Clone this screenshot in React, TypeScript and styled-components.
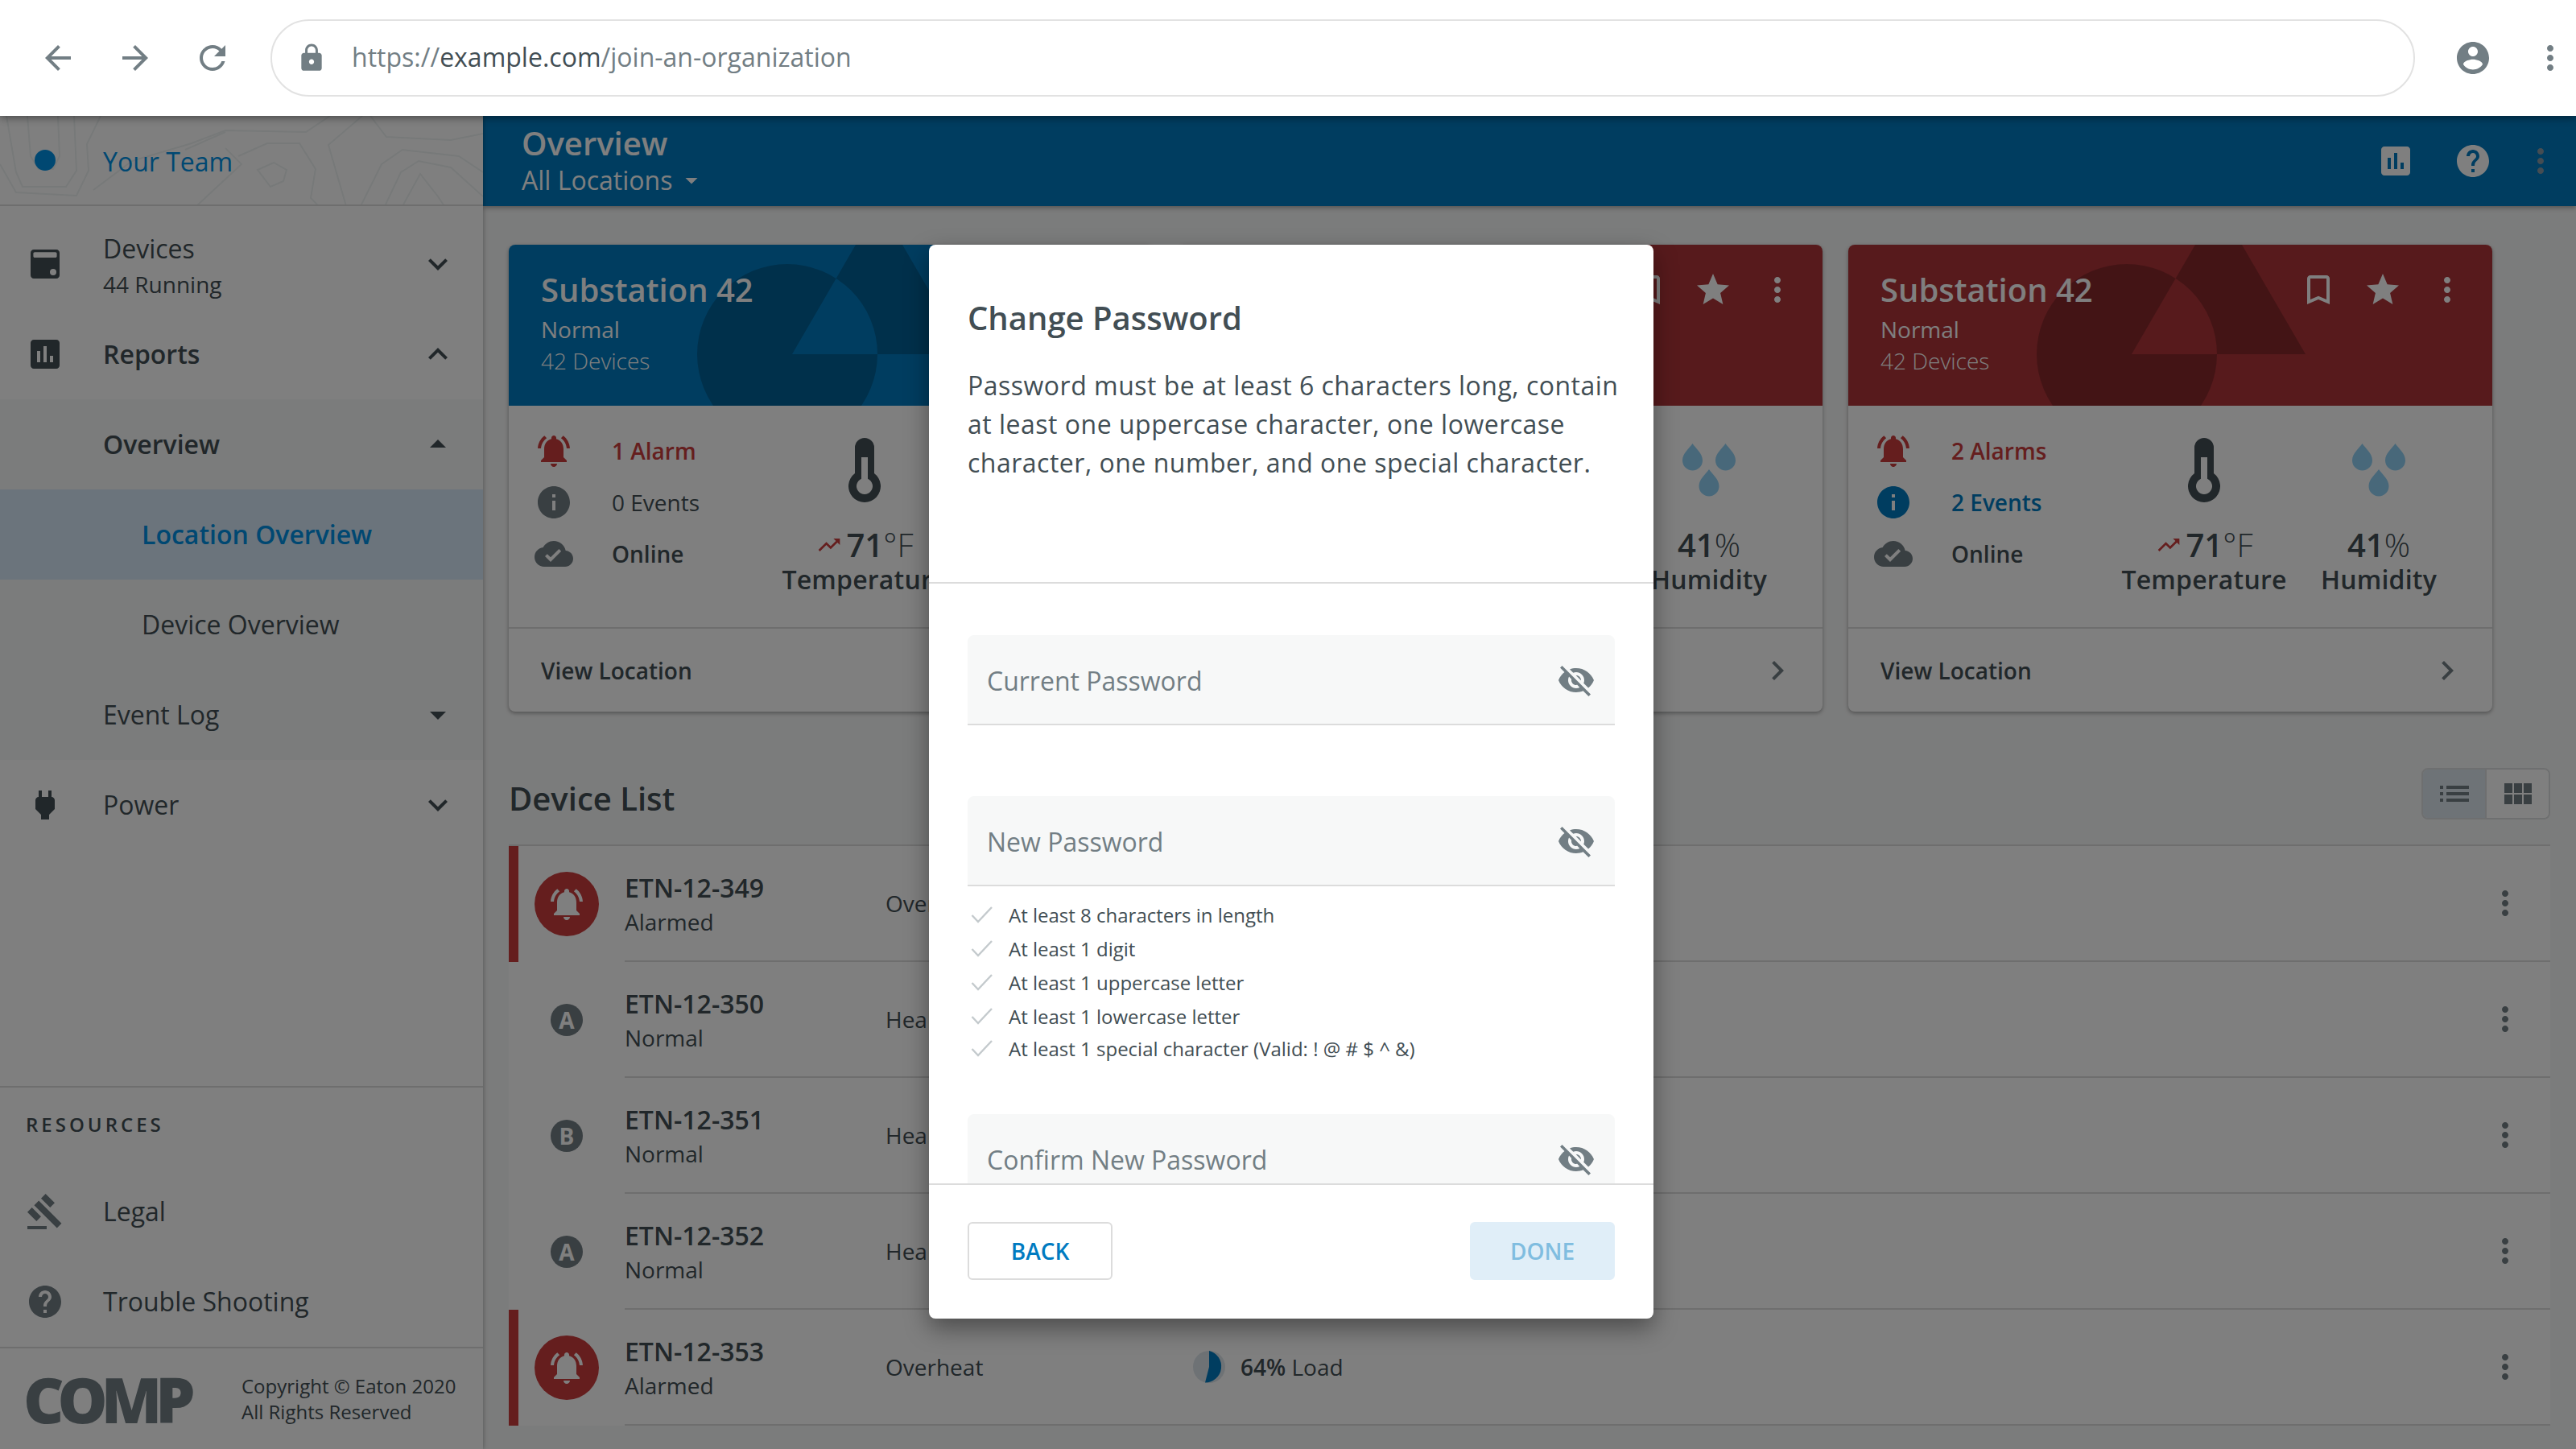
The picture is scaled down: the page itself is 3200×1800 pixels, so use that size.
import React from 'react';
import styled, { createGlobalStyle } from 'styled-components';

const Global = createGlobalStyle`
  html, body { margin: 0; padding: 0; background: #fff; }
  body { font-family: "Open Sans", "Noto Sans", sans-serif; color: #424e54; }
  * { box-sizing: border-box; }
`;

const P = {
  back: 'M20 11H7.83l5.59-5.59L12 4l-8 8 8 8 1.41-1.41L7.83 13H20v-2z',
  forward: 'M12 4l-1.41 1.41L16.17 11H4v2h12.17l-5.58 5.59L12 20l8-8z',
  refresh: 'M17.65 6.35C16.2 4.9 14.21 4 12 4c-4.42 0-7.99 3.58-7.99 8s3.57 8 7.99 8c3.73 0 6.84-2.55 7.73-6h-2.08c-.82 2.33-3.04 4-5.65 4-3.31 0-6-2.69-6-6s2.69-6 6-6c1.66 0 3.14.69 4.22 1.78L13 11h7V4l-2.35 2.35z',
  lock: 'M18 8h-1V6c0-2.76-2.24-5-5-5S7 3.24 7 6v2H6c-1.1 0-2 .9-2 2v10c0 1.1.9 2 2 2h12c1.1 0 2-.9 2-2V10c0-1.1-.9-2-2-2zm-6 9c-1.1 0-2-.9-2-2s.9-2 2-2 2 .9 2 2-.9 2-2 2zm3.1-9H8.9V6c0-1.71 1.39-3.1 3.1-3.1 1.71 0 3.1 1.39 3.1 3.1v2z',
  account: 'M12 2C6.48 2 2 6.48 2 12s4.48 10 10 10 10-4.48 10-10S17.52 2 12 2zm0 3c1.66 0 3 1.34 3 3s-1.34 3-3 3-3-1.34-3-3 1.34-3 3-3zm0 14.2c-2.5 0-4.71-1.28-6-3.22.03-1.99 4-3.08 6-3.08 1.99 0 5.97 1.09 6 3.08-1.29 1.94-3.5 3.22-6 3.22z',
  more: 'M12 8c1.1 0 2-.9 2-2s-.9-2-2-2-2 .9-2 2 .9 2 2 2zm0 2c-1.1 0-2 .9-2 2s.9 2 2 2 2-.9 2-2-.9-2-2-2zm0 6c-1.1 0-2 .9-2 2s.9 2 2 2 2-.9 2-2-.9-2-2-2z',
  chart: 'M19 3H5c-1.1 0-2 .9-2 2v14c0 1.1.9 2 2 2h14c1.1 0 2-.9 2-2V5c0-1.1-.9-2-2-2zM9 17H7v-7h2v7zm4 0h-2V7h2v10zm4 0h-2v-4h2v4z',
  help: 'M12 2C6.48 2 2 6.48 2 12s4.48 10 10 10 10-4.48 10-10S17.52 2 12 2zm1 17h-2v-2h2v2zm2.07-7.75l-.9.92C13.45 12.9 13 13.5 13 15h-2v-.5c0-1.1.45-2.1 1.17-2.83l1.24-1.26c.37-.36.59-.86.59-1.41 0-1.1-.9-2-2-2s-2 .9-2 2H8c0-2.21 1.79-4 4-4s4 1.79 4 4c0 .88-.36 1.68-.93 2.25z',
  down: 'M16.59 8.59L12 13.17 7.41 8.59 6 10l6 6 6-6z',
  up: 'M12 8l-6 6 1.41 1.41L12 10.83l4.59 4.58L18 14z',
  caretDown: 'M7 10l5 5 5-5z',
  caretUp: 'M7 14l5-5 5 5z',
  right: 'M10 6L8.59 7.41 13.17 12l-4.58 4.59L10 18l6-6z',
  eyeOff: 'M12 7c2.76 0 5 2.24 5 5 0 .65-.13 1.26-.36 1.83l2.92 2.92c1.51-1.26 2.7-2.89 3.43-4.75-1.73-4.39-6-7.5-11-7.5-1.4 0-2.74.25-3.98.7l2.16 2.16C10.74 7.13 11.35 7 12 7zM2 4.27l2.28 2.28.46.46C3.08 8.3 1.78 10.02 1 12c1.73 4.39 6 7.5 11 7.5 1.55 0 3.03-.3 4.38-.84l.42.42L19.73 22 21 20.73 3.27 3 2 4.27zM7.53 9.8l1.55 1.55c-.05.21-.08.43-.08.65 0 1.66 1.34 3 3 3 .22 0 .44-.03.65-.08l1.55 1.55c-.67.33-1.41.53-2.2.53-2.76 0-5-2.24-5-5 0-.79.2-1.53.53-2.2zm4.31-.78l3.15 3.15.02-.16c0-1.66-1.34-3-3-3l-.17.01z',
  bookmark: 'M17 3H7c-1.1 0-1.99.9-1.99 2L5 21l7-3 7 3V5c0-1.1-.9-2-2-2zm0 15l-5-2.18L7 18V5h10v13z',
  star: 'M12 17.27L18.18 21l-1.64-7.03L22 9.24l-7.19-.61L12 2 9.19 8.63 2 9.24l5.46 4.73L5.82 21z',
  bell: 'M7.58 4.08L6.15 2.65C3.75 4.48 2.17 7.3 2.03 10.5h2c.15-2.65 1.51-4.97 3.55-6.42zm12.39 6.42h2c-.15-3.2-1.73-6.02-4.12-7.85l-1.42 1.43c2.02 1.45 3.39 3.77 3.54 6.42zM18 11c0-3.07-1.64-5.64-4.5-6.32V4c0-.83-.67-1.5-1.5-1.5s-1.5.67-1.5 1.5v.68C7.63 5.36 6 7.92 6 11v5l-2 2v1h16v-1l-2-2v-5zm-6 11c.14 0 .27-.01.4-.04.65-.14 1.18-.58 1.44-1.18.1-.24.15-.5.15-.78h-4c.01 1.1.9 2 2.01 2z',
  info: 'M12 2C6.48 2 2 6.48 2 12s4.48 10 10 10 10-4.48 10-10S17.52 2 12 2zm1 15h-2v-6h2v6zm0-8h-2V7h2v2z',
  cloud: 'M19.35 10.04C18.67 6.59 15.64 4 12 4 9.11 4 6.6 5.64 5.35 8.04 2.34 8.36 0 10.91 0 14c0 3.31 2.69 6 6 6h13c2.76 0 5-2.24 5-5 0-2.64-2.05-4.78-4.65-4.96zM10 17l-3.5-3.5 1.41-1.41L10 14.17 15.18 9l1.41 1.41L10 17z',
  trend: 'M16 6l2.29 2.29-4.88 4.88-4-4L2 16.59 3.41 18l6-6 4 4 6.3-6.29L22 12V6z',
  gavel: 'M1 21h12v2H1zM5.245 8.07l2.83-2.827 14.14 14.142-2.828 2.828zM12.317 1l5.657 5.656-2.83 2.83-5.654-5.66zM3.825 9.485l5.657 5.657-2.828 2.828-5.657-5.657z',
  device: 'M5 3h14c1.1 0 2 .9 2 2v14c0 1.1-.9 2-2 2H5c-1.1 0-2-.9-2-2V5c0-1.1.9-2 2-2zm.6 1.6c-.5 0-.9.4-.9.9v1.6c0 .5.4.9.9.9h12.8c.5 0 .9-.4.9-.9V5.5c0-.5-.4-.9-.9-.9H5.6zM17 15a2 2 0 1 0 0 4 2 2 0 0 0 0-4z',
  plug: 'M16.01 7L16 3h-2v4h-4V3H8v4h-.01C7 6.99 6 7.99 6 8.99v5.49L9.5 18v3h5v-3l3.5-3.51v-5.5c0-1-1-2-1.99-1.99z',
};

const Svg = styled.svg<{ $size: number; $color: string }>`
  flex: none;
  display: block;
  width: ${p => p.$size}px;
  height: ${p => p.$size}px;
  fill: ${p => p.$color};
`;

const Icon = ({ d, size = 48, color = '#424e54' }: { d: string; size?: number; color?: string }) => (
  <Svg viewBox="0 0 24 24" $size={size} $color={color}>
    <path d={d} fillRule="evenodd" />
  </Svg>
);

const Page = styled.div`
  width: 3200px;
  height: 1800px;
  display: flex;
  flex-direction: column;
  overflow: hidden;
`;

const BrowserBar = styled.header`
  position: relative;
  z-index: 5;
  height: 144px;
  flex: none;
  display: flex;
  align-items: center;
  gap: 48px;
  padding: 0 8px 0 48px;
  background: #fff;
  box-shadow: 0 2px 10px rgba(0, 0, 0, 0.45);
`;

const UrlPill = styled.div`
  flex: 1;
  height: 96px;
  display: flex;
  align-items: center;
  gap: 31px;
  padding: 0 0 0 30px;
  border: 2px solid #e2e2e2;
  border-radius: 48px;
  font-size: 32px;
  color: #727e84;
  white-space: nowrap;
`;

const UrlText = styled.span`
  margin-top: -3px;
`;

const UrlHost = styled.span`
  color: #424e54;
`;

const Workspace = styled.div`
  position: relative;
  flex: 1;
  display: flex;
  min-height: 0;
`;

const Sidebar = styled.aside`
  position: relative;
  z-index: 1;
  width: 600px;
  flex: none;
  display: flex;
  flex-direction: column;
  background: #fff;
  box-shadow: 0 0 6px rgba(0, 0, 0, 0.35);
`;

const TeamHeader = styled.div`
  position: relative;
  height: 112px;
  flex: none;
  display: flex;
  align-items: center;
  gap: 48px;
  padding-left: 32px;
  overflow: hidden;
  border-bottom: 2px solid #dcdcdc;
  font-size: 32px;
  color: #0090e4;
`;

const Topo = styled.svg`
  position: absolute;
  inset: 0;
  width: 600px;
  height: 112px;
  fill: none;
  stroke: #eef3f3;
  stroke-width: 2;
`;

const TeamDotSlot = styled.span`
  position: relative;
  width: 48px;
  height: 48px;
  display: flex;
  align-items: center;
  justify-content: center;
`;

const TeamDot = styled.span`
  width: 26px;
  height: 26px;
  border-radius: 50%;
  background: #0090e4;
`;

const TeamName = styled.span`
  position: relative;
  top: 1px;
`;

const Nav = styled.nav`
  padding-top: 16px;
`;

const NavGroup = styled.div`
  background: #f7f8f8;
`;

const NavRow = styled.div<{ $indent?: number; $active?: boolean }>`
  height: 112px;
  display: flex;
  align-items: center;
  gap: 48px;
  padding: 0 32px 0 ${p => p.$indent ?? 32}px;
  background: ${p => (p.$active ? '#d6e8f8' : 'transparent')};
`;

const NavLabel = styled.div<{ $weight?: number; $blue?: boolean }>`
  flex: 1;
  font-size: 32px;
  line-height: 44px;
  font-weight: ${p => p.$weight ?? 400};
  color: ${p => (p.$blue ? '#0090e4' : '#424e54')};
`;

const NavTwoLine = styled(NavLabel)`
  padding-top: 6px;
`;

const NavSub = styled.div`
  font-size: 28px;
`;

const Spacer = styled.div`
  flex: 1;
`;

const Resources = styled.div`
  flex: none;
  border-top: 2px solid #dcdcdc;
`;

const ResourcesCaption = styled.div`
  height: 98px;
  display: flex;
  align-items: center;
  padding: 0 32px 7px;
  font-size: 24px;
  font-weight: 600;
  letter-spacing: 4px;
`;

const SideFooter = styled.div`
  flex: none;
  height: 127px;
  display: flex;
  align-items: center;
  padding-left: 32px;
  border-top: 2px solid #dcdcdc;
`;

const Logo = styled.div`
  width: 268px;
  margin-left: -3px;
  font-size: 78px;
  font-weight: 800;
  letter-spacing: -8px;
  line-height: 1;
  color: #727e84;
`;

const Copyright = styled.div`
  margin-left: 3px;
  font-size: 24px;
  line-height: 32px;
`;

const Main = styled.main`
  flex: 1;
  min-width: 0;
  display: flex;
  flex-direction: column;
  background: #f7f8f8;
`;

const AppBar = styled.div`
  height: 112px;
  flex: none;
  display: flex;
  align-items: center;
  padding: 0 20px 0 48px;
  background: #007bc1;
  color: #fff;
  box-shadow: 0 2px 6px rgba(0, 0, 0, 0.35);
`;

const AppTitles = styled.div`
  flex: 1;
`;

const AppTitle = styled.div`
  font-size: 40px;
  line-height: 48px;
  font-weight: 600;
`;

const AppSubtitle = styled.div`
  display: flex;
  align-items: center;
  gap: 6px;
  font-size: 32px;
  line-height: 44px;
`;

const AppActions = styled.div`
  display: flex;
  align-items: center;
  gap: 48px;
`;

const AppDots = styled.span`
  margin-left: -12px;
`;

const Content = styled.div`
  flex: 1;
  min-height: 0;
  padding: 48px 32px 0;
  overflow: hidden;
`;

const CardRow = styled.div`
  display: flex;
  gap: 32px;
`;

const Card = styled.article`
  width: 800px;
  height: 580px;
  flex: none;
  display: flex;
  flex-direction: column;
  border-radius: 8px;
  overflow: hidden;
  background: #fff;
  box-shadow: 0 2px 5px rgba(0, 0, 0, 0.35);
`;

const CardHead = styled.div<{ $tone: 'blue' | 'red' }>`
  position: relative;
  height: 200px;
  flex: none;
  display: flex;
  justify-content: space-between;
  padding: 32px 32px 0 40px;
  color: #fff;
  background: ${p => (p.$tone === 'blue' ? '#007bc1' : '#ae3438')};
`;

const CardPattern = styled.svg`
  position: absolute;
  inset: 0;
  width: 800px;
  height: 200px;
  fill: rgba(0, 0, 0, 0.22);
`;

const CardTitles = styled.div`
  position: relative;
`;

const CardTitle = styled.div`
  font-size: 40px;
  line-height: 48px;
  font-weight: 600;
  margin-bottom: 6px;
`;

const CardSub = styled.div<{ $light?: boolean }>`
  font-size: 28px;
  line-height: 39px;
  font-weight: ${p => (p.$light ? 300 : 400)};
`;

const CardActions = styled.div`
  position: relative;
  display: flex;
  gap: 32px;
`;

const CardBody = styled.div`
  height: 275px;
  flex: none;
  display: flex;
  padding-left: 32px;
`;

const StatList = styled.div`
  width: 288px;
  flex: none;
  padding-top: 24px;
`;

const Stat = styled.div<{ $color?: string; $weight?: number }>`
  height: 64px;
  display: flex;
  align-items: center;
  gap: 48px;
  font-size: 28px;
  font-weight: ${p => p.$weight ?? 400};
  color: ${p => p.$color ?? '#424e54'};
`;

const Metric = styled.div<{ $width: number }>`
  width: ${p => p.$width}px;
  flex: none;
  padding-top: 40px;
  display: flex;
  flex-direction: column;
  align-items: center;
  white-space: nowrap;
`;

const MetricIcon = styled.div`
  height: 80px;
  display: flex;
  align-items: center;
`;

const MetricValue = styled.div`
  margin-top: 28px;
  height: 50px;
  display: flex;
  align-items: center;
  gap: 6px;
  font-size: 40px;
  font-weight: 600;
  line-height: 50px;
`;

const MetricUnit = styled.span`
  font-weight: 300;
`;

const MetricName = styled.div`
  height: 36px;
  line-height: 36px;
  font-size: 32px;
  font-weight: 600;
  letter-spacing: 0.2px;
`;

const CardFoot = styled.div`
  flex: 1;
  display: flex;
  align-items: center;
  justify-content: space-between;
  padding: 0 32px 0 40px;
  border-top: 2px solid #dcdcdc;
  font-size: 28px;
  font-weight: 600;
`;

const ListHead = styled.div`
  height: 95px;
  margin-top: 70px;
  display: flex;
  justify-content: space-between;
  align-items: flex-start;
`;

const ListTitle = styled.h2`
  margin: 14px 0 0;
  font-size: 40px;
  line-height: 48px;
  font-weight: 600;
`;

const ViewToggle = styled.div`
  display: flex;
  width: 160px;
  height: 64px;
  border: 2px solid #dcdee0;
  border-radius: 8px;
  overflow: hidden;
`;

const ToggleCell = styled.div<{ $active?: boolean }>`
  flex: 1;
  display: flex;
  align-items: center;
  justify-content: center;
  background: ${p => (p.$active ? '#dce6ee' : '#fff')};
  & + & {
    border-left: 2px solid #dcdee0;
  }
`;

const GlyphSvg = styled.svg`
  display: block;
  fill: #727e84;
`;

const DeviceTable = styled.div`
  border-top: 2px solid #dcdcdc;
`;

const DeviceRowWrap = styled.div<{ $alarm: boolean }>`
  height: 144px;
  display: flex;
  align-items: stretch;
  background: #fff;
  border-left: 12px solid ${p => (p.$alarm ? '#ca3c3d' : '#fff')};
`;

const AvatarCol = styled.div`
  width: 132px;
  flex: none;
  display: flex;
  align-items: center;
  justify-content: center;
  padding-right: 12px;
`;

const AlarmAvatar = styled.div`
  width: 80px;
  height: 80px;
  border-radius: 50%;
  display: flex;
  align-items: center;
  justify-content: center;
  background: #ca3c3d;
`;

const GradeChip = styled.div`
  width: 40px;
  height: 40px;
  border-radius: 50%;
  display: flex;
  align-items: center;
  justify-content: center;
  background: #727e84;
  color: #fff;
  font-size: 28px;
  font-weight: 700;
`;

const RowBody = styled.div`
  flex: 1;
  display: flex;
  align-items: center;
  padding-right: 32px;
  border-bottom: 2px solid #dcdcdc;
`;

const NameCol = styled.div`
  width: 324px;
  flex: none;
`;

const DeviceName = styled.div`
  font-size: 32px;
  line-height: 40px;
  font-weight: 600;
  margin-top: 4px;
`;

const DeviceState = styled.div`
  font-size: 28px;
  line-height: 40px;
  margin-top: 2px;
`;

const IssueCol = styled.div`
  width: 382px;
  flex: none;
  font-size: 28px;
`;

const LoadCol = styled.div`
  flex: 1;
  display: flex;
  align-items: center;
  gap: 19px;
  font-size: 28px;
`;

const LoadStrong = styled.span`
  font-weight: 600;
`;

const Overlay = styled.div`
  position: absolute;
  inset: 0;
  z-index: 2;
  background: rgba(0, 0, 0, 0.5);
`;

const Modal = styled.section`
  position: absolute;
  z-index: 3;
  left: 1154px;
  top: 160px;
  width: 900px;
  height: 1334px;
  display: flex;
  flex-direction: column;
  border-radius: 8px;
  background: #fff;
  box-shadow: 0 12px 30px rgba(0, 0, 0, 0.4);
  overflow: hidden;
`;

const ModalScroll = styled.div`
  flex: 1;
  min-height: 0;
  overflow: hidden;
`;

const ModalIntro = styled.div`
  padding: 67px 36px 124px 48px;
  border-bottom: 2px solid #dcdcdc;
`;

const ModalTitle = styled.h1`
  margin: 0 0 36px;
  font-size: 40px;
  line-height: 48px;
  font-weight: 600;
`;

const ModalText = styled.p`
  margin: 0;
  font-size: 32px;
  line-height: 48px;
  letter-spacing: 0.5px;
`;

const ModalFields = styled.div`
  padding: 64px 48px 0;
`;

const Field = styled.div<{ $gap?: number }>`
  height: 112px;
  margin-top: ${p => p.$gap ?? 0}px;
  display: flex;
  align-items: center;
  justify-content: space-between;
  padding: 2px 24px 0;
  background: #f7f8f8;
  border-bottom: 2px solid #dcdcdc;
  border-radius: 8px 8px 0 0;
  font-size: 32px;
  color: #727e84;
`;

const Rules = styled.ul`
  list-style: none;
  margin: 14px 0 0;
  padding: 0;
`;

const Rule = styled.li`
  height: 42px;
  display: flex;
  align-items: center;
  gap: 19px;
  padding-left: 4px;
  font-size: 24px;
  &:last-child {
    margin-top: -2px;
  }
`;

const CheckSvg = styled.svg`
  flex: none;
  width: 28px;
  height: 22px;
  fill: none;
  stroke: #c4cacd;
  stroke-width: 2.4;
`;

const ModalFoot = styled.div`
  flex: none;
  height: 168px;
  display: flex;
  justify-content: space-between;
  padding: 46px 48px 0;
  border-top: 2px solid #dcdcdc;
`;

const ModalButton = styled.button<{ $primary?: boolean }>`
  width: 180px;
  height: 72px;
  padding: 0;
  border-radius: 6px;
  border: 2px solid ${p => (p.$primary ? '#e0eef8' : '#dcdcdc')};
  background: ${p => (p.$primary ? '#e0eef8' : '#fff')};
  color: ${p => (p.$primary ? '#80bde0' : '#007bc1')};
  font-family: inherit;
  font-size: 28px;
  font-weight: 600;
`;

const Thermometer = () => (
  <svg width="40" height="80" viewBox="0 0 40 80" fill="#424e54">
    <path fillRule="evenodd" d="M8 12a12 12 0 0 1 24 0v32a20 20 0 1 1-24 0zM16 24h8v26.8a10 10 0 1 1-8 0z" />
  </svg>
);

const drop = (cx: number, t: number) =>
  `M${cx} ${t}C${cx + 4} ${t + 6} ${cx + 12.5} ${t + 12} ${cx + 12.5} ${t + 21}a12.5 12.5 0 0 1-25 0C${cx - 12.5} ${t + 12} ${cx - 4} ${t + 6} ${cx} ${t}z`;

const Drops = () => (
  <svg width="66" height="66" viewBox="0 0 66 66" fill="#90d0f4">
    <path d={drop(12.5, 0) + drop(53.5, 0) + drop(33, 32)} />
  </svg>
);

const Check = () => (
  <CheckSvg viewBox="0 0 28 22">
    <polyline points="1.5,12 9,20 26,2" />
  </CheckSvg>
);

const LoadPie = () => (
  <svg width="40" height="40" viewBox="0 0 40 40">
    <circle cx="20" cy="20" r="20" fill="#dce4ea" />
    <path d="M20 20V0a20 20 0 0 1-5 39.4z" fill="#007bc1" />
  </svg>
);

type CardData = {
  tone: 'blue' | 'red';
  alarms: string;
  events: string;
  eventsActive: boolean;
};

const cards: CardData[] = [
  { tone: 'blue', alarms: '1 Alarm', events: '0 Events', eventsActive: false },
  { tone: 'red', alarms: '1 Alarm', events: '0 Events', eventsActive: false },
  { tone: 'red', alarms: '2 Alarms', events: '2 Events', eventsActive: true },
];

const SubstationCard = ({ data }: { data: CardData }) => (
  <Card>
    <CardHead $tone={data.tone}>
      <CardPattern viewBox="0 0 800 200">
        <path fillRule="evenodd" d="M458 136a112 112 0 1 1-224 0a112 112 0 1 1 224 0zM352 136L568 136L460 -50z" />
      </CardPattern>
      <CardTitles>
        <CardTitle>Substation 42</CardTitle>
        <CardSub>Normal</CardSub>
        <CardSub $light>42 Devices</CardSub>
      </CardTitles>
      <CardActions>
        <Icon d={P.bookmark} color="#fff" />
        <Icon d={P.star} color="#fff" />
        <Icon d={P.more} color="#fff" />
      </CardActions>
    </CardHead>
    <CardBody>
      <StatList>
        <Stat $color="#ca3c3d" $weight={600}>
          <Icon d={P.bell} color="#ca3c3d" />
          {data.alarms}
        </Stat>
        <Stat $color={data.eventsActive ? '#007bc1' : undefined} $weight={data.eventsActive ? 600 : 400}>
          <Icon d={P.info} color={data.eventsActive ? '#007bc1' : '#727e84'} />
          {data.events}
        </Stat>
        <Stat $weight={600}>
          <Icon d={P.cloud} color="#727e84" />
          Online
        </Stat>
      </StatList>
      <Metric $width={244}>
        <MetricIcon>
          <Thermometer />
        </MetricIcon>
        <MetricValue>
          <Icon d={P.trend} size={32} color="#ca3c3d" />
          <span>
            71<MetricUnit>°F</MetricUnit>
          </span>
        </MetricValue>
        <MetricName>Temperature</MetricName>
      </Metric>
      <Metric $width={190}>
        <MetricIcon>
          <Drops />
        </MetricIcon>
        <MetricValue>
          <span>
            41<MetricUnit>%</MetricUnit>
          </span>
        </MetricValue>
        <MetricName>Humidity</MetricName>
      </Metric>
    </CardBody>
    <CardFoot>
      View Location
      <Icon d={P.right} color="#727e84" />
    </CardFoot>
  </Card>
);

const devices = [
  { name: 'ETN-12-349', state: 'Alarmed', issue: 'Overheat', chip: '' },
  { name: 'ETN-12-350', state: 'Normal', issue: 'Healthy', chip: 'A' },
  { name: 'ETN-12-351', state: 'Normal', issue: 'Healthy', chip: 'B' },
  { name: 'ETN-12-352', state: 'Normal', issue: 'Healthy', chip: 'A' },
  { name: 'ETN-12-353', state: 'Alarmed', issue: 'Overheat', chip: '' },
];

const rules = [
  'At least 8 characters in length',
  'At least 1 digit',
  'At least 1 uppercase letter',
  'At least 1 lowercase letter',
  'At least 1 special character (Valid: ! @ # $ ^ &)',
];

export default function App() {
  return (
    <Page>
      <Global />
      <BrowserBar>
        <Icon d={P.back} color="#727e84" />
        <Icon d={P.forward} color="#727e84" />
        <Icon d={P.refresh} color="#727e84" />
        <UrlPill>
          <Icon d={P.lock} size={38} color="#727e84" />
          <UrlText>
            https://<UrlHost>example.com</UrlHost>/join-an-organization
          </UrlText>
        </UrlPill>
        <Icon d={P.account} color="#727e84" />
        <Icon d={P.more} color="#727e84" />
      </BrowserBar>
      <Workspace>
        <Sidebar>
          <TeamHeader>
            <Topo viewBox="0 0 600 112">
              <path d="M8 0L20 70L28 88L82 88L95 68L92 0" />
              <path d="M34 0L38 50L48 66L66 66L74 50L72 0" />
              <path d="M0 60L20 95L95 99L110 68L108 35L125 0" />
              <path d="M320 67L340 58L356 67L352 81L336 88z" />
              <path d="M116 92L164 56L238 34L280 18L380 20L410 0" />
              <path d="M296 50L332 34L372 34L392 66L386 102L396 112" />
              <path d="M230 42L280 20M244 112L300 60L280 40M430 112L408 36L450 0" />
              <path d="M448 112L474 60L500 42L570 50L600 70" />
              <path d="M478 112L498 70L520 56L560 64L600 100" />
              <path d="M500 112L522 72L544 100L552 112" />
              <path d="M460 0L480 26L560 30L600 22" />
            </Topo>
            <TeamDotSlot>
              <TeamDot />
            </TeamDotSlot>
            <TeamName>Your Team</TeamName>
          </TeamHeader>
          <Nav>
            <NavRow>
              <Icon d={P.device} />
              <NavTwoLine>
                Devices
                <NavSub>44 Running</NavSub>
              </NavTwoLine>
              <Icon d={P.down} />
            </NavRow>
            <NavRow>
              <Icon d={P.chart} />
              <NavLabel $weight={600}>Reports</NavLabel>
              <Icon d={P.up} />
            </NavRow>
            <NavGroup>
              <NavRow $indent={128}>
                <NavLabel $weight={600}>Overview</NavLabel>
                <Icon d={P.caretUp} />
              </NavRow>
              <NavRow $indent={176} $active>
                <NavLabel $weight={600} $blue>
                  Location Overview
                </NavLabel>
              </NavRow>
              <NavRow $indent={176}>
                <NavLabel>Device Overview</NavLabel>
              </NavRow>
              <NavRow $indent={128}>
                <NavLabel>Event Log</NavLabel>
                <Icon d={P.caretDown} />
              </NavRow>
            </NavGroup>
            <NavRow>
              <Icon d={P.plug} />
              <NavLabel>Power</NavLabel>
              <Icon d={P.down} />
            </NavRow>
          </Nav>
          <Spacer />
          <Resources>
            <ResourcesCaption>RESOURCES</ResourcesCaption>
            <NavRow>
              <Icon d={P.gavel} color="#727e84" />
              <NavLabel>Legal</NavLabel>
            </NavRow>
            <NavRow>
              <Icon d={P.help} color="#727e84" />
              <NavLabel>Trouble Shooting</NavLabel>
            </NavRow>
          </Resources>
          <SideFooter>
            <Logo>COMP</Logo>
            <Copyright>
              Copyright © Eaton 2020
              <br />
              All Rights Reserved
            </Copyright>
          </SideFooter>
        </Sidebar>
        <Main>
          <AppBar>
            <AppTitles>
              <AppTitle>Overview</AppTitle>
              <AppSubtitle>
                All Locations
                <Icon d={P.caretDown} size={36} color="#fff" />
              </AppSubtitle>
            </AppTitles>
            <AppActions>
              <Icon d={P.chart} color="#fff" />
              <Icon d={P.help} color="#fff" />
              <AppDots>
                <Icon d={P.more} color="#8a9ba6" />
              </AppDots>
            </AppActions>
          </AppBar>
          <Content>
            <CardRow>
              {cards.map((c, i) => (
                <SubstationCard key={i} data={c} />
              ))}
            </CardRow>
            <ListHead>
              <ListTitle>Device List</ListTitle>
              <ViewToggle>
                <ToggleCell $active>
                  <GlyphSvg width="36" height="20" viewBox="0 0 36 20">
                    <rect x="0" y="0" width="4" height="4" />
                    <rect x="0" y="8" width="4" height="4" />
                    <rect x="0" y="16" width="4" height="4" />
                    <rect x="8" y="0" width="28" height="4" />
                    <rect x="8" y="8" width="28" height="4" />
                    <rect x="8" y="16" width="28" height="4" />
                  </GlyphSvg>
                </ToggleCell>
                <ToggleCell>
                  <GlyphSvg width="34" height="26" viewBox="0 0 34 26">
                    <rect x="0" y="0" width="10" height="12" />
                    <rect x="12" y="0" width="10" height="12" />
                    <rect x="24" y="0" width="10" height="12" />
                    <rect x="0" y="14" width="10" height="12" />
                    <rect x="12" y="14" width="10" height="12" />
                    <rect x="24" y="14" width="10" height="12" />
                  </GlyphSvg>
                </ToggleCell>
              </ViewToggle>
            </ListHead>
            <DeviceTable>
              {devices.map(d => (
                <DeviceRowWrap key={d.name} $alarm={!d.chip}>
                  <AvatarCol>
                    {d.chip ? (
                      <GradeChip>{d.chip}</GradeChip>
                    ) : (
                      <AlarmAvatar>
                        <Icon d={P.bell} color="#fff" />
                      </AlarmAvatar>
                    )}
                  </AvatarCol>
                  <RowBody>
                    <NameCol>
                      <DeviceName>{d.name}</DeviceName>
                      <DeviceState>{d.state}</DeviceState>
                    </NameCol>
                    <IssueCol>{d.issue}</IssueCol>
                    <LoadCol>
                      <LoadPie />
                      <span>
                        <LoadStrong>64%</LoadStrong> Load
                      </span>
                    </LoadCol>
                    <Icon d={P.more} color="#727e84" />
                  </RowBody>
                </DeviceRowWrap>
              ))}
            </DeviceTable>
          </Content>
        </Main>
        <Overlay />
        <Modal>
          <ModalScroll>
            <ModalIntro>
              <ModalTitle>Change Password</ModalTitle>
              <ModalText>
                Password must be at least 6 characters long, contain at least one uppercase character, one lowercase
                character, one number, and one special character.
              </ModalText>
            </ModalIntro>
            <ModalFields>
              <Field>
                Current Password
                <Icon d={P.eyeOff} color="#727e84" />
              </Field>
              <Field $gap={88}>
                New Password
                <Icon d={P.eyeOff} color="#727e84" />
              </Field>
              <Rules>
                {rules.map(r => (
                  <Rule key={r}>
                    <Check />
                    {r}
                  </Rule>
                ))}
              </Rules>
              <Field $gap={61}>
                Confirm New Password
                <Icon d={P.eyeOff} color="#727e84" />
              </Field>
            </ModalFields>
          </ModalScroll>
          <ModalFoot>
            <ModalButton>BACK</ModalButton>
            <ModalButton $primary>DONE</ModalButton>
          </ModalFoot>
        </Modal>
      </Workspace>
    </Page>
  );
}
